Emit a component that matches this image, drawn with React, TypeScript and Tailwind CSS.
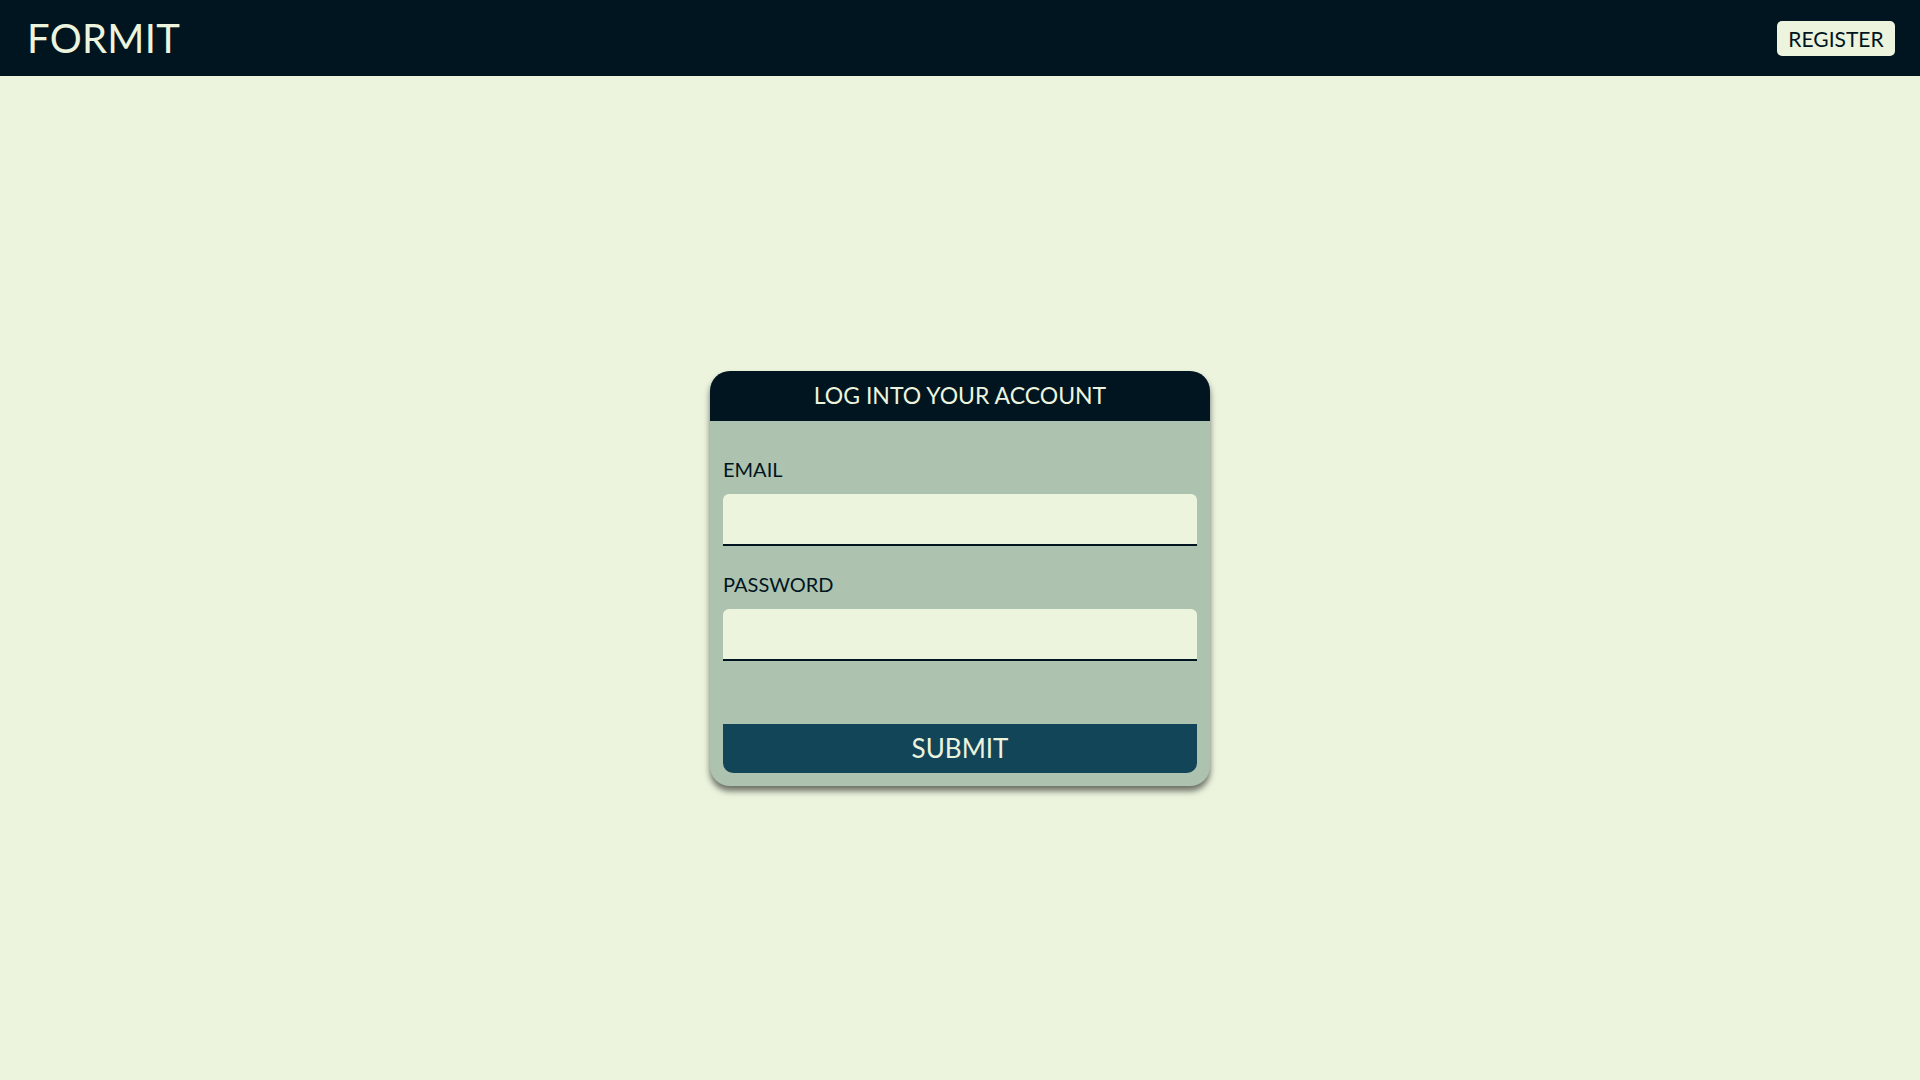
export default function App() {
  return (
    <div className="flex h-screen flex-col bg-[#ecf4de] font-['Lato',sans-serif]">
      <header className="flex h-[76px] shrink-0 items-center justify-between bg-[#011520] pl-[27px] pr-[25px]">
        <h1 className="text-[40px] leading-none tracking-[0.3px] text-[#ecf4de]">FORMIT</h1>
        <button className="h-[35px] w-[118px] rounded-[5px] bg-[#ecf4de] text-[21px] leading-none text-[#011520]">
          REGISTER
        </button>
      </header>
      <main className="flex flex-1 items-center justify-center">
        <form className="w-[500px] overflow-hidden rounded-[20px] bg-[#adc3b0] shadow-[0_5px_6px_rgba(0,0,0,0.55)]">
          <div className="flex h-[50px] items-center justify-center bg-[#011520]">
            <h2 className="text-[23px] leading-none text-[#ecf4de]">LOG INTO YOUR ACCOUNT</h2>
          </div>
          <div className="flex flex-col px-[13px] pb-[13px] pt-[38px]">
            <label className="text-[20px] leading-none text-[#011520]">EMAIL</label>
            <input
              type="email"
              className="mt-[15px] h-[52px] w-full rounded-t-[6px] border-b-2 border-[#011520] bg-[#ecf4de] px-3 outline-none"
            />
            <label className="mt-[28px] text-[20px] leading-none text-[#011520]">PASSWORD</label>
            <input
              type="password"
              className="mt-[15px] h-[52px] w-full rounded-t-[6px] border-b-2 border-[#011520] bg-[#ecf4de] px-3 outline-none"
            />
            <button
              type="button"
              className="mt-[63px] h-[49px] w-full rounded-b-[10px] bg-[#134559] text-[26px] leading-none text-[#ecf4de]"
            >
              SUBMIT
            </button>
          </div>
        </form>
      </main>
    </div>
  );
}
